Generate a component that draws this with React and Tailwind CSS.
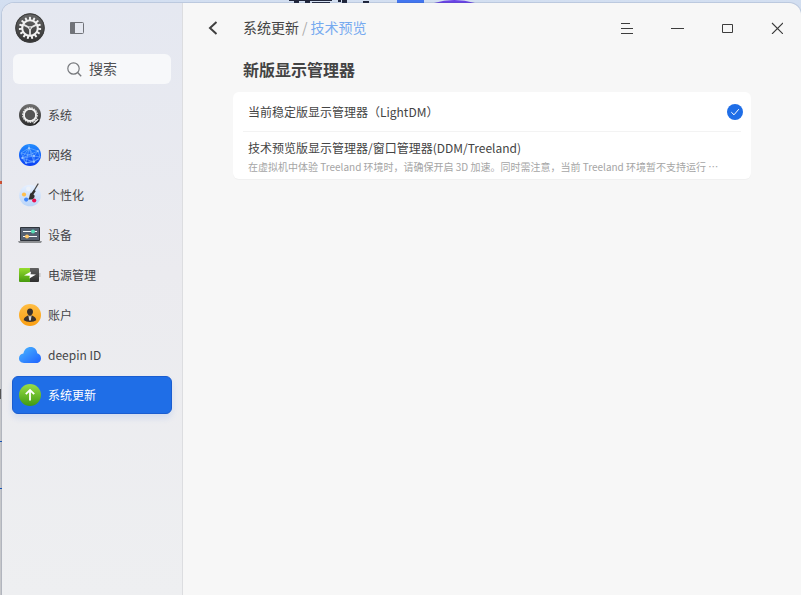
import { useState } from "react";

function SettingsLogo() {
  const teeth = Array.from({ length: 15 }, (_, i) => i * 24);
  return (
    <svg viewBox="0 0 30 30" className="size-[30px]" aria-hidden="true">
      <defs>
        <linearGradient id="logo" x1="0" y1="0" x2="0" y2="1">
          <stop offset="0" stopColor="#686868" />
          <stop offset="1" stopColor="#333333" />
        </linearGradient>
      </defs>
      <circle cx="15" cy="15" r="14.7" fill="url(#logo)" />
      <circle cx="15" cy="15" r="14.2" fill="none" stroke="#3d3d3d" />
      {teeth.map((angle) => (
        <rect key={angle} x="14" y="3.8" width="2" height="3.4" rx="0.6" fill="#f1f1f1" transform={`rotate(${angle} 15 15)`} />
      ))}
      <circle cx="15" cy="15" r="7.8" fill="none" stroke="#f1f1f1" strokeWidth="2" />
      <g stroke="#e6e6e6" strokeWidth="1.8">
        <path d="M15 15V22M15 15L8.4 11.6M15 15L21.6 11.6" />
      </g>
      <circle cx="15" cy="15" r="1.8" fill="#f1f1f1" />
      <circle cx="15" cy="15" r="0.8" fill="#444444" />
    </svg>
  );
}

function SystemIcon() {
  return (
    <svg viewBox="0 0 22 22" className="size-[22px]" aria-hidden="true">
      <defs>
        <linearGradient id="sys" x1="0" y1="0" x2="0" y2="1">
          <stop offset="0" stopColor="#707070" />
          <stop offset="1" stopColor="#2c2c2c" />
        </linearGradient>
      </defs>
      <circle cx="11" cy="11" r="11" fill="url(#sys)" />
      <circle cx="11" cy="11" r="7.2" fill="none" stroke="#dedede" strokeWidth="1.4" strokeDasharray="1.6 0.9" />
      <circle cx="11" cy="11" r="6" fill="none" stroke="#f0f0f0" strokeWidth="2" />
      <circle cx="11" cy="11" r="4.9" fill="#555555" />
      <path d="M15 20L20 16" stroke="#222222" strokeWidth="2.4" />
      <path d="M15 19L18.8 15.6" stroke="#e8e8e8" strokeWidth="1.4" strokeLinecap="round" />
    </svg>
  );
}

function NetworkIcon() {
  return (
    <svg viewBox="0 0 22 22" className="size-[22px]" aria-hidden="true">
      <defs>
        <linearGradient id="net" x1="0" y1="0" x2="0" y2="1">
          <stop offset="0" stopColor="#218cff" />
          <stop offset="1" stopColor="#0a40f5" />
        </linearGradient>
      </defs>
      <circle cx="11" cy="11" r="11" fill="url(#net)" />
      <g fill="none" stroke="#8fc4ff" strokeWidth="0.5">
        <path d="M2 9L10 4L19 7L21 13L15 18L7 19L3 14L10 4L15 18L3 14L19 7M10 4L7 19L20 15M2 9L15 12L19 7M2 9L7 19M10 1L10 4L15 12L15 18M3 14L15 12L21 13" />
      </g>
      <g fill="#d8ebff">
        <circle cx="10" cy="4" r="0.8" />
        <circle cx="19" cy="7" r="0.7" />
        <circle cx="3" cy="14" r="0.7" />
        <circle cx="15" cy="12" r="0.8" />
        <circle cx="15" cy="18" r="0.8" />
        <circle cx="7" cy="19" r="0.7" />
      </g>
    </svg>
  );
}

function PersonalizationIcon() {
  return (
    <svg viewBox="0 0 22 24" className="h-6 w-[22px]" aria-hidden="true">
      <defs>
        <linearGradient id="palette" x1="0" y1="0" x2="0" y2="1">
          <stop offset="0" stopColor="#e6f0ff" />
          <stop offset="1" stopColor="#b9d4f8" />
        </linearGradient>
      </defs>
      <circle cx="11" cy="12.5" r="10.8" fill="url(#palette)" />
      <circle cx="9.5" cy="6" r="2.4" fill="#eef2f8" />
      <circle cx="5" cy="11.5" r="2.1" fill="#ffbf4d" />
      <circle cx="7.2" cy="16.6" r="2.1" fill="#3f87fa" />
      <circle cx="15.2" cy="17.5" r="2.1" fill="#e8114f" />
      <path d="M19 1L13 11" stroke="#474747" strokeWidth="1.3" strokeLinecap="round" />
      <path d="M15.8 7.4L12.6 12" stroke="#303030" strokeWidth="2.4" />
      <path d="M12 9.6L15.4 12.2C16.4 15 13.4 17.4 9.3 16.2C11 14.5 10 12 12 9.6Z" fill="#303030" />
    </svg>
  );
}

function DeviceIcon() {
  return (
    <svg viewBox="0 0 24 18" className="h-[18px] w-6 shrink-0" aria-hidden="true">
      <rect x="2" y="1" width="20" height="14" rx="0.8" fill="#2f343b" />
      <rect x="3" y="2" width="18" height="12" fill="#566171" />
      <path d="M5 5.5H19M5 10.5H19" stroke="#f5f7f8" />
      <circle cx="15" cy="5.5" r="2" fill="#55dfb8" />
      <circle cx="9" cy="10.5" r="2" fill="#ffc769" />
      <path d="M0 15H24L23 17H1Z" fill="#8d8f92" />
    </svg>
  );
}

function PowerIcon() {
  return (
    <svg viewBox="0 0 22 14" className="h-3.5 w-[22px]" aria-hidden="true">
      <defs>
        <linearGradient id="battery" x1="0" y1="0" x2="0" y2="1">
          <stop offset="0" stopColor="#96dc2e" />
          <stop offset="1" stopColor="#45990d" />
        </linearGradient>
        <linearGradient id="batteryEmpty" x1="0" y1="0" x2="0" y2="1">
          <stop offset="0" stopColor="#626262" />
          <stop offset="1" stopColor="#2d2d2d" />
        </linearGradient>
      </defs>
      <path d="M1 0H11V14H1Q0 14 0 13V1Q0 0 1 0Z" fill="url(#battery)" />
      <path d="M11 0H19Q20 0 20 1V13Q20 14 19 14H11Z" fill="url(#batteryEmpty)" />
      <path d="M20.5 5H21.3V9H20.5Z" fill="#a0a0a0" />
      <path d="M5 7.6L12 3.6L11.6 6.3L17 6.6L10.3 10.4L10.8 7.8Z" fill="#ffffff" />
    </svg>
  );
}

function AccountIcon() {
  return (
    <svg viewBox="0 0 22 22" className="size-[22px]" aria-hidden="true">
      <defs>
        <linearGradient id="account" x1="0" y1="0" x2="0" y2="1">
          <stop offset="0" stopColor="#ffbd43" />
          <stop offset="1" stopColor="#fa9f12" />
        </linearGradient>
      </defs>
      <circle cx="11" cy="11" r="11" fill="url(#account)" />
      <path d="M11 4.6C13 4.6 14 6 14 7.8C14 9.6 12.8 11.6 11 11.6C9.2 11.6 8 9.6 8 7.8C8 6 9 4.6 11 4.6Z" fill="#3b322d" />
      <path d="M4.8 16.2C4.8 13.2 7 12.4 9.2 11.4H12.8C15 12.4 17.2 13.2 17.2 16.2Q15 18 11 18Q7 18 4.8 16.2Z" fill="#3b322d" />
      <path d="M9.4 11.2L11 12.4L12.6 11.2L11.8 16.6H10.2Z" fill="#d7d7d7" />
    </svg>
  );
}

function CloudIcon() {
  return (
    <svg viewBox="0 0 22 16" className="h-4 w-[22px]" aria-hidden="true">
      <defs>
        <linearGradient id="cloud" x1="0" y1="0" x2="1" y2="1">
          <stop offset="0" stopColor="#4bb8ff" />
          <stop offset="1" stopColor="#1f62ff" />
        </linearGradient>
      </defs>
      <path d="M5 16C2 16 0 14 0 11.3C0 8.7 1.8 6.7 4.4 6.5C5 2.7 8 0 11.6 0C15.4 0 18 2.6 18.2 6.2C20.6 6.8 22 8.8 22 11.2C22 14 20 16 17.2 16Z" fill="url(#cloud)" />
    </svg>
  );
}

function UpdateIcon() {
  return (
    <svg viewBox="0 0 22 22" className="size-[22px]" aria-hidden="true">
      <defs>
        <linearGradient id="update" x1="0" y1="0" x2="0" y2="1">
          <stop offset="0" stopColor="#9ade46" />
          <stop offset="1" stopColor="#3f9a12" />
        </linearGradient>
      </defs>
      <circle cx="11" cy="11" r="11" fill="url(#update)" />
      <path d="M11 16.4V6.4M6.8 10.2L11 6L15.2 10.2" fill="none" stroke="#ffffff" strokeWidth="1.8" />
    </svg>
  );
}

const NAV_ITEMS = [
  { id: "system", label: "系统", Icon: SystemIcon },
  { id: "network", label: "网络", Icon: NetworkIcon },
  { id: "personalization", label: "个性化", Icon: PersonalizationIcon },
  { id: "device", label: "设备", Icon: DeviceIcon },
  { id: "power", label: "电源管理", Icon: PowerIcon },
  { id: "accounts", label: "账户", Icon: AccountIcon },
  { id: "deepinid", label: "deepin ID", Icon: CloudIcon },
  { id: "update", label: "系统更新", Icon: UpdateIcon },
];

const MANAGERS = [
  { id: "lightdm", title: "当前稳定版显示管理器（LightDM）" },
  {
    id: "ddm",
    title: "技术预览版显示管理器/窗口管理器(DDM/Treeland)",
    description: "在虚拟机中体验 Treeland 环境时，请确保开启 3D 加速。同时需注意，当前 Treeland 环境暂不支持运行 ⋯",
  },
];

// slivers of the desktop that show around the window
function Desktop() {
  return (
    <div className="absolute inset-0 overflow-hidden bg-linear-to-b from-[#d3dff1] to-[#c6c7ca] to-45%" aria-hidden="true">
      <svg width="200" height="3" viewBox="0 0 200 3" className="absolute left-[288px] top-0">
        <path d="M1 0H44V1H1ZM6 1H11V3H6ZM17 1H22V3H17ZM24 2H42V3H24ZM50 0H53V2H50ZM54 0H59V3H54ZM75 1H81V3H75Z" fill="#20253a" />
        <path d="M109 0H136V3H109Z" fill="#4276f0" />
        <path d="M146 3Q166 -3 187 3Z" fill="#6a43e6" />
      </svg>
      <div className="absolute left-0 top-[181px] h-[3px] w-0.5 bg-[#d65230]" />
      <div className="absolute left-0 top-[389px] h-2.5 w-px bg-[#555555]" />
      <div className="absolute left-0 top-[441px] h-px w-0.5 bg-[#1453b8]" />
      <div className="absolute left-0 top-[488px] h-px w-0.5 bg-[#1453b8]" />
    </div>
  );
}

function Sidebar({ current, onSelect }) {
  return (
    <aside className="flex w-[181px] shrink-0 flex-col border-r border-[#dcdde0] bg-linear-to-b from-[#e5e8f1] via-[#ebebef] via-45% to-[#eeeff1] px-2.5">
      <div className="flex h-[50px] items-center gap-6 pl-[3px]">
        <SettingsLogo />
        <button type="button" aria-label="切换侧边栏">
          <svg viewBox="0 0 16 14" className="h-3.5 w-4" aria-hidden="true">
            <rect x="1.5" y="1.5" width="13" height="11" rx="1" fill="none" stroke="#717379" />
            <path d="M2 1H6V13H2Q1 13 1 12V2Q1 1 2 1Z" fill="#717379" />
          </svg>
        </button>
      </div>

      <label className="mx-px mt-px flex h-[30px] items-center justify-center gap-[7px] rounded-md bg-[#f7f8fa]">
        <svg viewBox="0 0 15 15" className="size-[15px]" aria-hidden="true">
          <circle cx="6.5" cy="6.5" r="5.7" fill="none" stroke="#77797d" strokeWidth="1.2" />
          <path d="M10.6 10.6L14.2 14.2" stroke="#77797d" strokeWidth="1.4" />
        </svg>
        <input
          type="text"
          aria-label="搜索"
          placeholder="搜索"
          className="field-sizing-content pb-0.5 text-sm text-[#414d68] outline-none placeholder:text-[#4f5053]"
        />
      </label>

      <nav className="mt-3 flex flex-col gap-0.5">
        {NAV_ITEMS.map(({ id, label, Icon }) => (
          <button
            key={id}
            type="button"
            onClick={() => onSelect(id)}
            aria-current={current === id ? "page" : undefined}
            className={
              current === id
                ? "flex h-[38px] items-center gap-[7px] rounded-md border border-[#1a5dd0] bg-[#1f6ee7] px-1.5 text-xs text-white shadow-[0_4px_6px_rgba(31,110,231,0.12)]"
                : "flex h-[38px] items-center gap-[7px] rounded-md border border-transparent px-1.5 text-xs text-[#444548]"
            }
          >
            <span className="flex w-[22px] shrink-0 justify-center">
              <Icon />
            </span>
            {label}
          </button>
        ))}
      </nav>
    </aside>
  );
}

function WindowControls() {
  return (
    <div className="ml-auto flex gap-[18px]">
      <button type="button" aria-label="菜单" className="flex size-8 items-center justify-center">
        <svg viewBox="0 0 12 12" className="size-3" stroke="#3d3d3d" aria-hidden="true">
          <path d="M0 1.5H9M0 6.5H12M0 11.5H12" />
        </svg>
      </button>
      <button type="button" aria-label="最小化" className="flex size-8 items-center justify-center">
        <svg viewBox="0 0 14 12" className="h-3 w-3.5" stroke="#3d3d3d" aria-hidden="true">
          <path d="M1 6.5H14" />
        </svg>
      </button>
      <button type="button" aria-label="最大化" className="flex size-8 items-center justify-center">
        <svg viewBox="0 0 12 12" className="size-3" fill="none" stroke="#3d3d3d" aria-hidden="true">
          <path d="M1.5 2.5H11.5V10.5H1.5Z" />
        </svg>
      </button>
      <button type="button" aria-label="关闭" className="flex size-8 items-center justify-center">
        <svg viewBox="0 0 12 12" className="size-3" stroke="#3d3d3d" strokeWidth="1.1" aria-hidden="true">
          <path d="M1 1L12 12M12 1L1 12" />
        </svg>
      </button>
    </div>
  );
}

export default function App() {
  const [page, setPage] = useState("update");
  const [manager, setManager] = useState("lightdm");

  return (
    <div className="relative flex min-h-screen flex-col pl-0.5 pt-[3px] font-['Noto_Sans_CJK_SC',sans-serif]">
      <Desktop />
      <div className="relative flex flex-1 overflow-hidden rounded-t-xl bg-[#f7f7f7] shadow-[0_0_0_1px_rgba(60,80,120,0.15)]">
        <Sidebar current={page} onSelect={setPage} />

        <main className="min-w-0 flex-1">
          <header className="flex h-[50px] items-center pl-5 pr-2">
            <button type="button" aria-label="返回" className="flex size-5 items-center justify-center">
              <svg viewBox="0 0 10 14" className="h-3.5 w-2.5" fill="none" stroke="#404040" strokeWidth="2" aria-hidden="true">
                <path d="M8.5 1L2 7L8.5 13" />
              </svg>
            </button>
            <nav aria-label="路径" className="ml-5 flex items-center gap-[3px] pb-0.5 text-sm">
              <a href="#update" className="text-[#444444]">系统更新</a>
              <span className="text-[#aaaaaa]">/</span>
              <span className="text-[#76aaf0]">技术预览</span>
            </nav>
            <WindowControls />
          </header>

          <section className="px-[50px] pt-1">
            <h1 id="managers" className="pl-2.5 text-base font-bold text-[#444444]">新版显示管理器</h1>
            <div role="radiogroup" aria-labelledby="managers" className="mt-[11px] rounded-md bg-white px-2.5 shadow-[0_1px_1px_rgba(0,0,0,0.03)]">
              {MANAGERS.map((item) => (
                <label
                  key={item.id}
                  className="flex min-h-10 items-center gap-2 border-b border-[#f3f3f3] pl-[5px] last:min-h-[47px] last:border-b-0 last:pt-0.5"
                >
                  <span className="min-w-0 flex-1">
                    <span className="block text-xs leading-5 text-[#444444]">{item.title}</span>
                    {item.description ? (
                      <span className="block truncate text-[10px] leading-[18px] text-[#a5a5a5]">{item.description}</span>
                    ) : null}
                  </span>
                  <span className="relative -mr-0.5 flex size-4 shrink-0">
                    <input
                      type="radio"
                      name="manager"
                      checked={manager === item.id}
                      onChange={() => setManager(item.id)}
                      className="size-4 appearance-none rounded-full checked:bg-[#1f6ee7]"
                    />
                    {manager === item.id ? (
                      <svg viewBox="0 0 16 16" className="pointer-events-none absolute inset-0 size-4" fill="none" stroke="#ffffff" aria-hidden="true">
                        <path d="M4.3 8.2L7 10.8L11.8 5.2" />
                      </svg>
                    ) : null}
                  </span>
                </label>
              ))}
            </div>
          </section>
        </main>
      </div>
    </div>
  );
}
